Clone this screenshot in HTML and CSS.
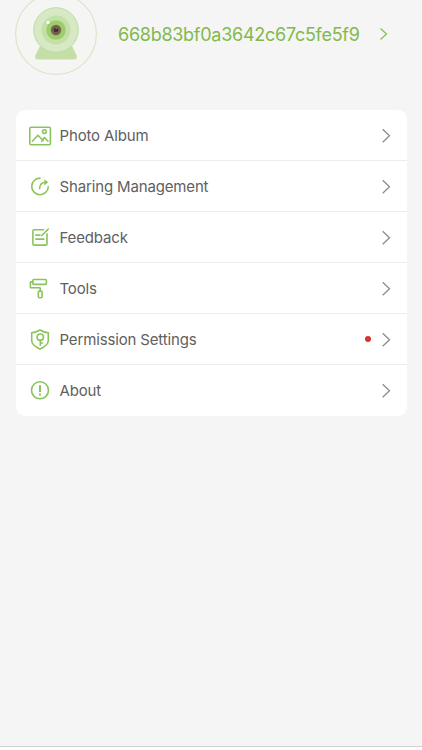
FILE: index.html
```
<!DOCTYPE html>
<html lang="en">
<head>
    <meta charset="UTF-8">
    <meta name="viewport" content="width=device-width, initial-scale=1.0">
    <title>Profile</title>
    <link rel="stylesheet" href="styles.css">
</head>
<body>
    <div id="main">
        <header class="profile">
            <svg class="avatar" viewBox="0 0 82 82">
                <circle cx="41" cy="41" r="40.4" fill="#f5f5f3" stroke="#dce5c8" stroke-width="1.2"/>
                <path d="M25 53h32l4.500 9q1.500 4.500-3 4.500H23.500q-4.500 0-3-4.500z" fill="#c3dfa7"/>
                <circle cx="41" cy="37" r="22.300" fill="#d7e9c4" stroke="#bfdda4"/>
                <circle cx="41" cy="37" r="14.500" fill="#c3e0a5"/>
                <circle cx="41" cy="37" r="9.800" fill="#9ccc6c"/>
                <circle cx="41" cy="37" r="5.200" fill="#78604f"/>
                <circle cx="41" cy="37" r="2.300" fill="#3e302c"/>
                <circle cx="41.200" cy="35.500" r=".6" fill="#b7a89b"/>
                <circle cx="33" cy="29.400" r="1.600" fill="#fff"/>
            </svg>
            <span class="user-id">668b83bf0a3642c67c5fe5f9</span>
            <svg class="arrow arrow-green" viewBox="0 0 10 16"><path d="M1.500 2.500 7.500 8l-6 5.500"/></svg>
        </header>

        <nav class="menu">
            <a class="item">
                <svg class="icon" viewBox="0 0 24 24">
                    <rect x="1.800" y="3.300" width="20.600" height="17.400" rx="1.200"/>
                    <circle cx="16.400" cy="7.600" r="1.900"/>
                    <path d="m4.400 17.200 5.500-6 5.200 5.300M13.700 17.200l2.800-3.700 3.500 3.700"/>
                </svg>
                <span class="label">Photo Album</span>
                <svg class="arrow" viewBox="0 0 10 16"><path d="m1.700 1.200 6.800 6.500-6.800 6.500"/></svg>
            </a>
            <a class="item">
                <svg class="icon" viewBox="0 0 24 24">
                    <path d="M12 3.100a8.300 8.300 0 1 0 8.300 8.600"/>
                    <path d="M11.600 13.500c0-4.200 1.600-6.300 6.600-6.300"/>
                    <path d="m16.800 5.100 3 2.100-3 2.500z" class="tip"/>
                </svg>
                <span class="label">Sharing Management</span>
                <svg class="arrow" viewBox="0 0 10 16"><path d="m1.700 1.200 6.800 6.500-6.800 6.500"/></svg>
            </a>
            <a class="item">
                <svg class="icon" viewBox="0 0 24 24">
                    <path d="M15.600 3.800H6.100Q4.900 3.800 4.900 5v12.900q0 1.200 1.200 1.200h11.700q1.200 0 1.200-1.200V7.900M20.300 3l-6.500 6.500M7.800 9.100h4.200M7.800 13.100h8.200"/>
                </svg>
                <span class="label">Feedback</span>
                <svg class="arrow" viewBox="0 0 10 16"><path d="m1.700 1.200 6.800 6.500-6.800 6.500"/></svg>
            </a>
            <a class="item">
                <svg class="icon" viewBox="0 0 24 24">
                    <rect x="4.800" y="2.500" width="13.600" height="4.900" rx="1"/>
                    <path d="M4.800 4.900H2.900q-.5 0-.5.500v4.800q0 .5.500.5h8.800q.5 0 .5.500v3"/>
                    <rect x="10.300" y="14.100" width="3.800" height="6.700" rx="1.200"/>
                </svg>
                <span class="label">Tools</span>
                <svg class="arrow" viewBox="0 0 10 16"><path d="m1.700 1.200 6.800 6.500-6.800 6.500"/></svg>
            </a>
            <a class="item">
                <svg class="icon" viewBox="0 0 24 24">
                    <path d="M12 2q3.900 2.300 8.300 2.900V12.500q0 4.800-8.300 8.600Q3.700 17.300 3.700 12.500V4.900Q8.100 4.300 12 2z"/>
                    <circle cx="12.300" cy="9.200" r="3.200"/>
                    <path d="M12.300 12.400v4.800M12.300 15h2.200"/>
                </svg>
                <span class="label">Permission Settings</span>
                <span class="dot"></span>
                <svg class="arrow" viewBox="0 0 10 16"><path d="m1.700 1.200 6.800 6.500-6.800 6.500"/></svg>
            </a>
            <a class="item">
                <svg class="icon" viewBox="0 0 24 24">
                    <circle cx="12" cy="11.300" r="8.500"/>
                    <path class="mark" d="M12 6.200v6.900M12 14.600v2"/>
                </svg>
                <span class="label">About</span>
                <svg class="arrow" viewBox="0 0 10 16"><path d="m1.700 1.200 6.800 6.500-6.800 6.500"/></svg>
            </a>
        </nav>
        <div class="bottom-bar"></div>
    </div>
</body>
</html>
```
FILE: styles.css
```
body {
    margin: 0;
    padding: 0;
    font-family: 'Inter', sans-serif;
    background-color: #f5f5f5;
    overflow: hidden;
}
#main {
    height: 750px;
    display: flex;
    flex-direction: column;
}
.profile {
    display: flex;
    align-items: center;
    height: 82px;
    margin: -7px 15px 0;
    flex-shrink: 0;
}
.avatar {
    width: 82px;
    height: 82px;
    flex-shrink: 0;
}
.user-id {
    width: 261px;
    margin-left: 21px;
    font-size: 18px;
    letter-spacing: -0.27px;
    color: #82b94d;
    white-space: nowrap;
}
.arrow {
    width: 10px;
    height: 16px;
    flex-shrink: 0;
    fill: none;
    stroke: #8c8c8c;
    stroke-width: 1.3;
}
.arrow-green {
    stroke: #8bc057;
}
.menu {
    margin: 35px 15.5px 0;
    border-radius: 9px;
    background-color: #fff;
    overflow: hidden;
}
.item {
    display: flex;
    align-items: center;
    box-sizing: border-box;
    height: 51px;
    padding: 1px 16px 0 12.5px;
    border-bottom: 1px solid #ececec;
}
.item:last-child {
    border-bottom-color: transparent;
}
.icon {
    width: 24px;
    height: 24px;
    margin-right: 7.5px;
    fill: none;
    stroke: #8ac45c;
    stroke-width: 1.6;
    stroke-linecap: round;
    stroke-linejoin: round;
}
.icon .mark {
    stroke-width: 2;
    stroke-linecap: butt;
}
.icon .tip {
    fill: #8ac45c;
    stroke-width: 0.6;
}
.label {
    flex: 1;
    font-size: 15px;
    letter-spacing: -0.15px;
    color: #606060;
}
.dot {
    width: 6px;
    height: 6px;
    margin-right: 10px;
    margin-bottom: 1px;
    border-radius: 50%;
    background-color: #d9342b;
}
.bottom-bar {
    height: 4px;
    box-sizing: border-box;
    margin-top: auto;
    border-top: 1px solid #d2d2d2;
    background-color: #fff;
}
```
